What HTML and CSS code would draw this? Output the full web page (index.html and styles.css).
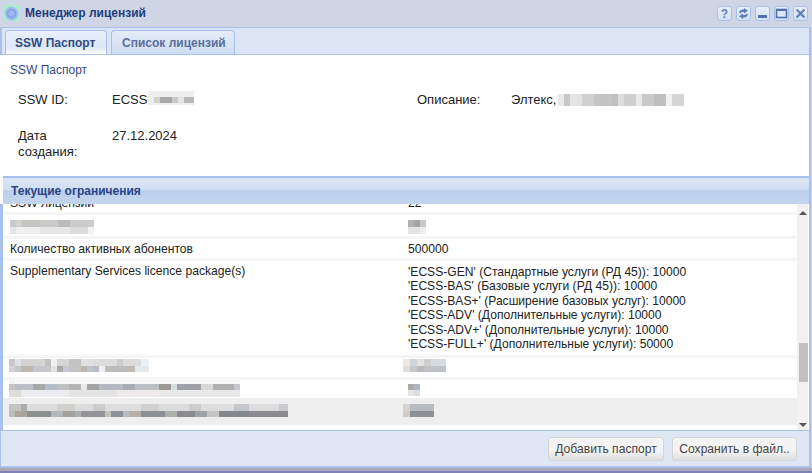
FILE: index.html
```html
<!DOCTYPE html>
<html lang="ru">
<head>
<meta charset="utf-8">
<title>Менеджер лицензий</title>
<link rel="stylesheet" href="styles.css">
</head>
<body>
<div class="window">
  <header class="titlebar">
    <span class="app-icon"><svg width="15" height="15" viewBox="0 0 15 15"><circle cx="7.500" cy="7.500" r="7" fill="#a9c0f3"/><circle cx="7.500" cy="7.500" r="5" fill="#86a2ea"/><circle cx="7.500" cy="7.500" r="3" fill="#9fb8f0"/></svg></span>
    <span class="title">Менеджер лицензий</span>
    <div class="tools">
      <button class="tool"><svg width="13" height="13" viewBox="0 0 13 13"><text x="6.500" y="11" text-anchor="middle" class="tool-q">?</text></svg></button>
      <button class="tool"><svg width="13" height="13" viewBox="0 0 13 13"><path d="M2 5.500c.5-2 2-3 4-3h1V1l4 2.700-4 2.700V5H6c-1 0-2 .2-2.500 1.500zM11 7.500c-.5 2-2 3-4 3H6V12L2 9.300l4-2.700V8h1c1 0 2-.2 2.500-1.500z" fill="#5f7fb5"/></svg></button>
      <button class="tool"><svg width="13" height="13" viewBox="0 0 13 13"><rect x="2" y="8" width="9" height="3" fill="#4f72aa"/></svg></button>
      <button class="tool"><svg width="13" height="13" viewBox="0 0 13 13"><rect x="1.500" y="2.500" width="10" height="8" fill="none" stroke="#4f72aa" stroke-width="1.600"/><rect x="1.500" y="2" width="10" height="2" fill="#4f72aa"/></svg></button>
      <button class="tool"><svg width="13" height="13" viewBox="0 0 13 13"><path d="M2.500 2.500l8 8M10.500 2.500l-8 8" stroke="#5f7fb5" stroke-width="2.200" fill="none"/></svg></button>
    </div>
  </header>

  <nav class="tabbar">
    <div class="tab tab-active">SSW Паспорт</div>
    <div class="tab tab-list">Список лицензий</div>
  </nav>

  <main class="content">
    <section class="passport">
      <div class="passport-title">SSW Паспорт</div>
      <div class="info">
        <div>SSW ID:</div>
        <div class="with-blur">ECSS<span class="blur blur-id"></span></div>
        <div>Описание:</div>
        <div class="with-blur">Элтекс,<span class="blur blur-desc"></span></div>
        <div>Дата<br>создания:</div>
        <div>27.12.2024</div>
      </div>
    </section>

    <h2 class="limits-head">Текущие ограничения</h2>

    <div class="grid-wrap">
      <div class="grid">
        <div class="rows">
          <div class="row row-first"><div class="name">SSW лицензий</div><div class="val">22</div></div>
          <div class="row row-b"><div class="name"><span class="blur b-r2l"></span></div><div class="val"><span class="blur b-r2r"></span></div></div>
          <div class="row row-c"><div class="name">Количество активных абонентов</div><div class="val">500000</div></div>
          <div class="row row-d">
            <div class="name">Supplementary Services licence package(s)</div>
            <div class="val">'ECSS-GEN' (Стандартные услуги (РД 45)): 10000<br>'ECSS-BAS' (Базовые услуги (РД 45)): 10000<br>'ECSS-BAS+' (Расширение базовых услуг): 10000<br>'ECSS-ADV' (Дополнительные услуги): 10000<br>'ECSS-ADV+' (Дополнительные услуги): 10000<br>'ECSS-FULL+' (Дополнительные услуги): 50000</div>
          </div>
          <div class="row row-e"><div class="name"><span class="blur b-r5l"></span></div><div class="val val-l"><span class="blur b-r5r"></span></div></div>
          <div class="row row-f"><div class="name"><span class="blur b-r6l"></span></div><div class="val"><span class="blur b-r6r"></span></div></div>
          <div class="row row-g"><div class="name"><span class="blur b-r7l"></span></div><div class="val val-l"><span class="blur b-r7r"></span></div></div>
        </div>
        <div class="scrollbar">
          <span class="arrow-up"></span>
          <span class="thumb"></span>
          <span class="arrow-down"></span>
        </div>
      </div>
    </div>

    <footer class="actions">
      <button class="btn btn-add">Добавить паспорт</button>
      <button class="btn btn-save">Сохранить в файл..</button>
    </footer>
  </main>
</div>
</body>
</html>
```
FILE: styles.css
```css
* { box-sizing: border-box; }
html, body { margin: 0; height: 100%; }
body {
  background: #7d80b4;
  font-family: "Liberation Sans", Arial, sans-serif;
  font-size: 13px;
  color: #222;
  overflow: hidden;
}
.window {
  width: 812px;
  height: 471px;
  display: flex;
  flex-direction: column;
  background: #cfd7e6;
  border-bottom: 3px solid #a8a8b8;
}
.titlebar {
  height: 27px;
  flex: none;
  display: flex;
  align-items: center;
  padding: 0 4px 1px 3px;
  background: #ced6e5;
}
.app-icon {
  width: 17px;
  height: 16px;
  border-radius: 4px;
  background: #a9efc9;
  display: flex;
  align-items: center;
  justify-content: center;
}
.title {
  margin-left: 5px;
  font-size: 12px;
  font-weight: bold;
  color: #1f3d7d;
}
.tools { margin-left: auto; display: flex; gap: 4px; }
.tool {
  width: 15px;
  height: 15px;
  padding: 0;
  border: 1px solid #a9c0ea;
  border-radius: 3px;
  background: linear-gradient(#e6eefa, #d5e0f3);
  display: flex;
  align-items: center;
  justify-content: center;
}
.tool-q { font: bold 12px "Liberation Sans", sans-serif; fill: #5f7fb5; }

.tabbar {
  height: 28px;
  flex: none;
  display: flex;
  align-items: flex-end;
  gap: 4px;
  margin: 0 1px 0 0;
  padding: 0 0 0 3px;
  background: #dbe5f4;
  border: 1px solid #a9c0ea;
  border-width: 1px 2px 1px 2px;
}
.tab {
  height: 24px;
  padding-top: 5px;
  border: 1px solid #a9c0ea;
  border-bottom: 0;
  border-radius: 4px 4px 0 0;
  background: linear-gradient(#e4edf9, #cfddf2);
  font-size: 12px;
  font-weight: bold;
  color: #5a6f9c;
}
.tab-active {
  width: 102px;
  padding-left: 9px;
  background: linear-gradient(#e8f0fb, #dbe7f8 70%, #fff);
  color: #34497f;
}
.tab-list { width: 124px; padding-left: 10px; }
.content {
  flex: 1;
  min-height: 0;
  display: flex;
  flex-direction: column;
  margin-right: 1px;
  background: #fff;
  border-right: 2px solid #a9c0ea;
  border-left: 2px solid #fff;
}
.passport { height: 121px; flex: none; }
.passport-title {
  padding: 8px 0 0 8px;
  font-size: 12px;
  color: #34497f;
}
.info {
  display: grid;
  grid-template-columns: 94px 305px 94px 1fr;
  grid-template-rows: 36px auto;
  margin-top: 15px;
  padding-left: 16px;
  line-height: 16px;
}
.with-blur { display: flex; align-items: flex-start; }

.blur { display: block; background-repeat: no-repeat; }
.blur-id {
  width: 46px; height: 14px; margin: -1px 0 0 1px;
  background:
    linear-gradient(90deg, #eeeeee 0 6px, #d0d0d0 6px 12px, #a8a8a8 12px 24px, #c8c8c8 24px 30px, #e4e4e4 30px 36px, #b8b8b8 36px 46px) 0 6px / 46px 6px no-repeat,
    linear-gradient(#eeeeee, #eeeeee);
}
.blur-desc {
  width: 126px; height: 12px; margin: 2px 0 0 2px;
  background: linear-gradient(90deg, #e9e9e9 0 6px, #c8c8c8 6px 12px, #e4e4e4 12px 24px, #d0d0d0 24px 36px, #c4c4c4 36px 54px, #bfbfbf 54px 60px, #dcdcdc 60px 66px, #cfcfcf 66px 78px, #e9e9e9 78px 84px, #c9c9c9 84px 96px, #bfbfbf 96px 108px, #f1f1f1 108px 114px, #d6d6d6 114px 126px);
}
.limits-head {
  margin: 0 0 0 1px;
  height: 28px;
  flex: none;
  padding: 6px 0 0 8px;
  font-size: 12px;
  line-height: 14px;
  font-weight: bold;
  color: #2c4484;
  border-top: 2px solid #a9c0ea;
  background: linear-gradient(#dbe6f5, #d0def2 46%, #bdd0ec 48%, #c3d4ee);
}
.grid-wrap {
  flex: none;
  height: 227px;
  margin-left: -2px;
  border-left: 3px solid #a9c0ea;
  border-bottom: 1px solid #a9c0ea;
  background: #fff;
}
.grid { display: flex; height: 100%; overflow: hidden; }
.rows { width: 794px; flex: none; height: 226px; overflow: hidden; font-size: 12.100px; }
.row {
  display: flex;
  border-bottom: 3px solid #f5f5f5;
}
.name { width: 398px; padding-left: 7px; flex: none; line-height: 15px; }
.val { padding-left: 7px; line-height: 14.400px; }
.row-first { height: 19px; margin-top: -8px; }
.row-b { height: 24px; padding-top: 5px; }
.row-c { height: 22px; padding-top: 3px; }
.row-c .val { line-height: 15px; }
.row-d { height: 97px; padding-top: 3px; }
.row-d .val { padding-top: 1px; }
.row-e { height: 22px; padding-top: 1px; }
.row-f { height: 18px; border-bottom: 0; }
.row-g { height: 27px; padding-top: 6px; background: #eeeeee; border-bottom: 0; }
.val-l { padding-left: 2px; }
.row-e .name .blur, .row-f .name .blur, .row-g .name .blur { margin-left: -1px; }

.b-r2l { width: 84px; height: 14px;
  background:
    linear-gradient(90deg, #c9c9c9 0 6px, #d1d1d1 6px 12px, #c8c4c0 12px 30px, #c9c9c9 30px 48px, #bcbcbc 48px 60px, #cccccc 60px 84px) 0 0 / 84px 7px no-repeat,
    linear-gradient(90deg, #e6e6e6 0 6px, #efefef 6px 30px, #e6e6e6 30px 60px, #dcdcdc 60px 78px, #f3f3f3 78px 84px) 0 7px / 84px 7px no-repeat;
}
.b-r2r { width: 18px; height: 14px;
  background:
    linear-gradient(90deg, #aab0bc 0 6px, #a8a4a0 6px 12px, #c4c8cc 12px 18px) 0 0 / 18px 7px no-repeat,
    linear-gradient(90deg, #e4e4e4 0 12px, #eeeeee 12px 18px) 0 7px / 18px 7px no-repeat;
}
.b-r5l { width: 140px; height: 13px;
  background:
    linear-gradient(90deg, #c6c6c6 0 6px, #dfe3e6 6px 12px, #d6d4d2 12px 36px, #c0c0c0 36px 42px, #f0f0f0 42px 48px, #d6d6d6 48px 60px, #c4c4c4 60px 72px, #e0e0e0 72px 84px, #dddddd 84px 108px, #cccccc 108px 114px, #dcdcdc 114px 132px, #edf1f3 132px 140px) 0 0 / 140px 7px no-repeat,
    linear-gradient(90deg, #d4d2cc 0 6px, #c4c8c8 6px 12px, #bfb8b0 12px 24px, #c4c8cc 24px 42px, #e3e3df 42px 48px, #aaaaaa 48px 54px, #c5cad5 54px 60px, #c4c4c4 60px 72px, #bfb5aa 72px 78px, #c0c4c8 78px 84px, #b8bcc8 84px 90px, #f0f0f0 90px 96px, #bcbcbc 96px 114px, #c0bcb4 114px 126px, #e4e8ea 126px 140px) 0 7px / 140px 6px no-repeat;
}
.b-r5r { width: 43px; height: 13px;
  background:
    linear-gradient(90deg, #eee8e4 0 7px, #d0d4dc 7px 14px, #e4e4de 14px 21px, #cfcfcf 21px 28px, #d5dde0 28px 43px) 0 0 / 43px 7px no-repeat,
    linear-gradient(90deg, #e4dedb 0 7px, #c8c8c8 7px 14px, #bcbcbc 14px 21px, #c0c4c8 21px 43px) 0 7px / 43px 6px no-repeat;
}
.b-r6l { width: 231px; height: 19px; margin-top: -2px;
  background:
    linear-gradient(90deg, #f4f4f4 0 6px, #f8f8f8 6px 231px) 0 0 / 231px 6px no-repeat,
    linear-gradient(90deg, #c4c4c0 0 6px, #bcc0c4 6px 24px, #a8a8a8 24px 36px, #b4bec8 36px 48px, #c0c0c0 48px 60px, #b4b4b4 60px 72px, #e8eaee 72px 78px, #a4a4a4 78px 90px, #b4bac0 90px 114px, #a8aeb4 114px 126px, #bcc0c4 126px 150px, #9c9894 150px 162px, #d4dddd 162px 168px, #a0a0a8 168px 192px, #d8d8d8 192px 204px, #b0b0b0 204px 225px, #c4c8cc 225px 231px) 0 6px / 231px 6px no-repeat,
    linear-gradient(90deg, #e0ddd8 0 12px, #eaecef 12px 60px, #e4e4e4 60px 108px, #eeeaea 108px 150px, #e8e8e8 150px 231px) 0 12px / 231px 7px no-repeat;
}
.b-r6r { width: 12px; height: 12px; margin: 4px 0 0 0;
  background:
    linear-gradient(90deg, #aaa 0 6px, #b0b4c0 6px 12px) 0 0 / 12px 6px no-repeat,
    linear-gradient(90deg, #e8e4e0 0 6px, #d8dde0 6px 12px) 0 6px / 12px 6px no-repeat;
}
.b-r7l { width: 279px; height: 13px;
  background:
    linear-gradient(90deg, #c4c4c0 0 12px, #a8acac 12px 18px, #dcdcdc 18px 48px, #d0d0cc 48px 66px, #dcdcdc 66px 84px, #cccccc 84px 96px, #dddddd 96px 132px, #d0d0d0 132px 150px, #dcdcdc 150px 180px, #cccccc 180px 192px, #dddddd 192px 225px, #c4c8cc 225px 240px, #dddddd 240px 270px, #c8ccd0 270px 279px) 0 0 / 279px 7px no-repeat,
    linear-gradient(90deg, #bcbcb8 0 6px, #aaa49c 6px 18px, #8c9090 18px 42px, #b0b8bc 42px 54px, #a4a09c 54px 66px, #a8b0b0 66px 72px, #949498 72px 96px, #c4c4bc 96px 102px, #8c9098 102px 114px, #b8bcc0 114px 120px, #b8b0a8 120px 132px, #8c9094 132px 156px, #acb0a8 156px 168px, #8c8c90 168px 186px, #9ca4a8 186px 198px, #c4c4c4 198px 210px, #84888c 210px 240px, #8c8c90 240px 279px) 0 7px / 279px 6px no-repeat;
}
.b-r7r { width: 31px; height: 13px;
  background:
    linear-gradient(90deg, #d8d2cc 0 7px, #b8bcc0 7px 31px) 0 0 / 31px 7px no-repeat,
    linear-gradient(90deg, #d0ccc8 0 7px, #8c9094 7px 31px) 0 7px / 31px 6px no-repeat;
}

.scrollbar {
  width: 11px;
  flex: none;
  background: #f1f1f1;
  display: flex;
  flex-direction: column;
  align-items: center;
  padding-top: 7px;
}
.arrow-up {
  border: 4px solid transparent;
  border-top: 0;
  border-bottom: 4px solid #555;
}
.arrow-down {
  margin-top: 41px;
  border: 4px solid transparent;
  border-bottom: 0;
  border-top: 4px solid #555;
}
.thumb {
  width: 9px;
  height: 39px;
  margin-top: 128px;
  align-self: flex-end;
  background: #c1c1c1;
  flex: none;
}
.actions {
  flex: 1;
  margin-left: -2px;
  display: flex;
  justify-content: flex-end;
  align-items: flex-start;
  gap: 8px;
  padding: 6px 12px 0 0;
  background: #dfe6f4;
  border-left: 1px solid #a9c0ea;
  border-bottom: 2px solid #a9c0ea;
}
.btn {
  height: 24px;
  padding: 0;
  border: 1px solid #d6d6d6;
  border-radius: 3px;
  background: linear-gradient(#f4f4f4 0 60%, #dedede);
  font: 12.100px "Liberation Sans", sans-serif;
  color: #444;
}
.btn-add { width: 116px; }
.btn-save { width: 125px; }
```
